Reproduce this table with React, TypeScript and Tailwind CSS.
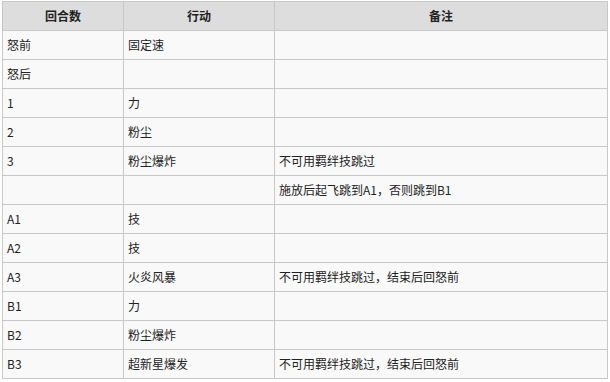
const rows: [string, string, string][] = [
  ["怒前", "固定速", ""],
  ["怒后", "", ""],
  ["1", "力", ""],
  ["2", "粉尘", ""],
  ["3", "粉尘爆炸", "不可用羁绊技跳过"],
  ["", "", "施放后起飞跳到A1，否则跳到B1"],
  ["A1", "技", ""],
  ["A2", "技", ""],
  ["A3", "火炎风暴", "不可用羁绊技跳过，结束后回怒前"],
  ["B1", "力", ""],
  ["B2", "粉尘爆炸", ""],
  ["B3", "超新星爆发", "不可用羁绊技跳过，结束后回怒前"],
];

export default function App() {
  return (
    <div className="w-[610px] h-[382px] bg-white pt-px pl-[2px] font-['Noto_Sans_CJK_SC',sans-serif] text-[12px] text-[#222]">
      <table className="border-collapse table-fixed w-[606px] bg-[#f9f9f9]">
        <colgroup>
          <col className="w-[121px]" />
          <col className="w-[151px]" />
          <col />
        </colgroup>
        <thead>
          <tr className="h-[29px] bg-[#dddddd]">
            <th className="border border-[#c8c8c8] font-bold text-center">回合数</th>
            <th className="border border-[#c8c8c8] font-bold text-center">行动</th>
            <th className="border border-[#c8c8c8] font-bold text-center">备注</th>
          </tr>
        </thead>
        <tbody>
          {rows.map((r, i) => (
            <tr key={i} className="h-[29px]">
              <td className="border border-[#c8c8c8] px-1 py-0">{r[0]}</td>
              <td className="border border-[#c8c8c8] px-1 py-0">{r[1]}</td>
              <td className="border border-[#c8c8c8] px-1 py-0">{r[2]}</td>
            </tr>
          ))}
        </tbody>
      </table>
    </div>
  );
}
